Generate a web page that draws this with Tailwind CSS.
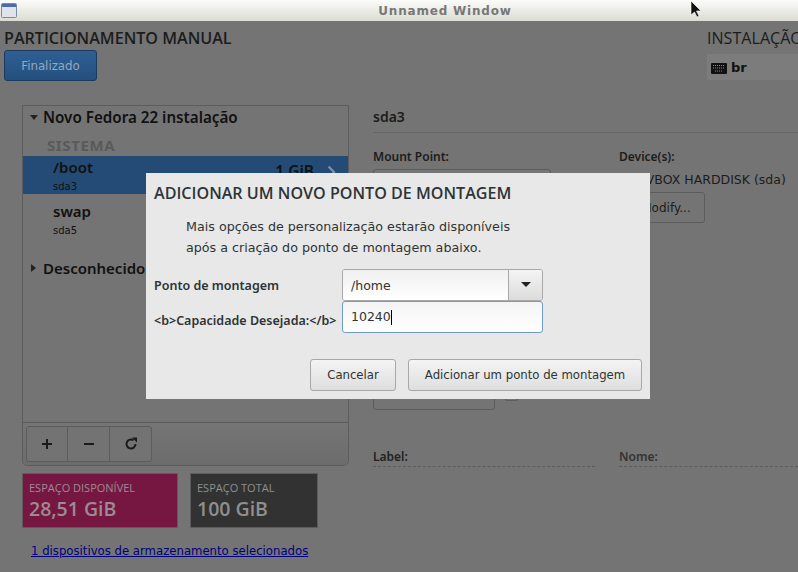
<!DOCTYPE html>
<html><head><meta charset="utf-8"><script src="https://cdn.jsdelivr.net/npm/@tailwindcss/browser@4"></script></head>
<body class="m-0 w-[798px] h-[572px] overflow-hidden relative bg-[#747474] font-['DejaVu_Sans',sans-serif]">
<header class="h-[21px] bg-gradient-to-b from-[#fbfbf9] to-[#dcdcd4] flex items-center relative">
  <svg class="absolute left-[1px] top-[3px]" width="16" height="15" viewBox="0 0 16 15"><rect x="0.5" y="0.5" width="15" height="14" rx="1" fill="#dfe3ea" stroke="#7a8aa5"/><rect x="1" y="1" width="14" height="3" fill="#4a6da8"/></svg>
  <div class="w-full text-center text-[12px] font-bold tracking-[0.8px] text-[#777] pl-[92px]">Unnamed Window</div>
</header>
<div class="flex h-[551px]">
  <section class="w-[349px] shrink-0 flex flex-col">
    <h1 class="pl-1 pt-[7px] pb-[2px] font-['Open_Sans',sans-serif] text-[16.1px] leading-[20px] font-semibold text-[#1c1c1c] whitespace-nowrap">PARTICIONAMENTO MANUAL</h1>
    <button class="ml-1 w-[93px] h-[31px] pt-[2px] rounded-[3px] border border-[#1d3a5c] bg-gradient-to-b from-[#2f5f93] to-[#24507f] text-[11.8px] text-[#94a8bf] text-center">Finalizado</button>
    <div class="ml-[22px] mt-6 w-[327px] h-[361px] border border-[#5c5c5c] rounded-b-[5px] flex flex-col">
      <div class="flex-1 flex flex-col">
        <div class="flex items-center h-[23px] pl-[6px] gap-[4px]">
          <svg width="10" height="6" viewBox="0 0 10 6"><path d="M1 0h8L5 5z" fill="#222"/></svg>
          <span class="font-['Noto_Sans',sans-serif] font-semibold text-[15.2px] text-[#111] whitespace-nowrap">Novo Fedora 22 instalação</span>
        </div>
        <div class="pl-6 mt-[10px] h-[12px] leading-[12px] text-[15px] tracking-[0.6px] font-bold font-['Noto_Sans',sans-serif] text-[#5a5a5a]">SISTEMA</div>
        <div class="mt-[5px] h-[38px] bg-[#234b75] pl-[30px] pr-[12px] flex justify-between">
          <div class="flex flex-col">
            <span class="font-['Noto_Sans',sans-serif] font-semibold text-[15px] leading-[20px] mt-[1px] text-[#111]">/boot</span>
            <span class="text-[10px] leading-[13px] mt-[3px] text-[#111]">sda3</span>
          </div>
          <div class="flex items-center h-[32px] gap-[13px]">
            <span class="font-['Noto_Sans',sans-serif] font-semibold text-[15.5px] text-[#111]">1 GiB</span>
            <svg width="9" height="14" viewBox="0 0 9 14"><path d="M1.5 1.5 7 7l-5.5 5.5" fill="none" stroke="#7f8ea0" stroke-width="2.2"/></svg>
          </div>
        </div>
        <div class="mt-[7px] pl-[30px] flex flex-col">
          <span class="font-['Noto_Sans',sans-serif] font-semibold text-[15px] leading-[20px] text-[#111]">swap</span>
          <span class="text-[10px] leading-[13px] mt-[3px] text-[#111]">sda5</span>
        </div>
        <div class="flex items-center h-[24px] mt-[19px] pl-[8px] gap-[6px]">
          <svg width="6" height="10" viewBox="0 0 6 10"><path d="M0 1v8l5-4z" fill="#222"/></svg>
          <span class="font-['Noto_Sans',sans-serif] font-semibold text-[15px] text-[#111]">Desconhecido</span>
        </div>
      </div>
      <div class="h-[43px] border-t border-[#5c5c5c] bg-gradient-to-b from-[#757575] to-[#6c6c6c] pl-[3px] pt-[3px] rounded-b-[5px]">
        <div class="flex w-[126px] h-[36px] border border-[#5c5c5c] rounded-[3px] bg-[#737373] text-[#1a1a1a]">
          <div class="w-[41px] border-r border-[#5c5c5c] flex items-center justify-center"><svg width="12" height="12" viewBox="0 0 12 12"><path d="M6 1v10M1 6h10" stroke="#1a1a1a" stroke-width="2"/></svg></div>
          <div class="w-[42px] border-r border-[#5c5c5c] flex items-center justify-center"><svg width="12" height="12" viewBox="0 0 12 12"><path d="M1 6h10" stroke="#1a1a1a" stroke-width="2"/></svg></div>
          <div class="flex-1 flex items-center justify-center"><svg width="14" height="14" viewBox="0 0 14 14"><path d="M11.5 7A4.5 4.5 0 1 1 9.6 3.3" fill="none" stroke="#1a1a1a" stroke-width="2"/><path d="M8 0.5h5v5z" fill="#1a1a1a"/></svg></div>
        </div>
      </div>
    </div>
    <div class="ml-[22px] mt-[7px] flex gap-3 font-['Open_Sans',sans-serif]">
      <div class="w-[156px] h-[55px] bg-[#761742] border border-[#5c5c5c] pl-[6px] pt-[7px] flex flex-col text-[#9c8b94]">
        <span class="text-[11px] leading-[14px] whitespace-nowrap">ESPAÇO DISPONÍVEL</span>
        <span class="text-[19.5px] leading-[24px] mt-[2px] font-semibold">28,51 GiB</span>
      </div>
      <div class="w-[128px] h-[55px] bg-[#323232] border border-[#5c5c5c] pl-[6px] pt-[7px] flex flex-col text-[#8f8f8f]">
        <span class="text-[11px] leading-[14px] whitespace-nowrap">ESPAÇO TOTAL</span>
        <span class="text-[19.5px] leading-[24px] mt-[2px] font-semibold">100 GiB</span>
      </div>
    </div>
    <a class="ml-[31px] mt-[15px] text-[11.7px] leading-[16px] text-[#00007f] underline whitespace-nowrap">1 dispositivos de armazenamento selecionados</a>
  </section>
  <section class="flex-1 min-w-0 flex flex-col pl-[24px] overflow-hidden">
    <div class="flex justify-end h-[84px] pt-[7px]">
      <div class="w-[91px] shrink-0 overflow-hidden">
        <div class="font-['Open_Sans',sans-serif] text-[16.1px] leading-[20px] text-[#1c1c1c] whitespace-nowrap">INSTALAÇÃO</div>
        <div class="mt-[6px] h-[26px] bg-[#7c7c7c] flex items-center pl-[4px] gap-[4px] pt-[2px]">
          <svg width="16" height="11" viewBox="0 0 16 11"><rect width="16" height="11" rx="1" fill="#111"/><path d="M2 2.5h12M2 5h12M4 8h8" stroke="#8a8a8a" stroke-dasharray="1 1"/></svg>
          <span class="text-[13px] font-bold text-[#111]">br</span>
        </div>
      </div>
    </div>
    <div class="h-[28px] border-b border-[#666] text-[14px] leading-[24px] font-['Noto_Sans',sans-serif] font-semibold text-[#1c1c1c]">sda3</div>
    <div class="flex mt-[16px]">
      <div class="w-[246px] shrink-0">
        <div class="text-[12px] leading-[16px] font-semibold text-[#1c1c1c] font-['Noto_Sans',sans-serif]">Mount Point:</div>
        <div class="mt-[4px] w-[178px] h-[30px] border border-[#5c5c5c] rounded-[3px] bg-[#777]"></div>
      </div>
      <div class="flex-1 whitespace-nowrap">
        <div class="text-[12px] leading-[16px] font-semibold text-[#1c1c1c] font-['Noto_Sans',sans-serif]">Device(s):</div>
        <div class="mt-[7px] text-[12.5px] leading-[16px] text-[#1c1c1c]">ATA VBOX HARDDISK (sda)</div>
        <button class="mt-[4px] w-[86px] h-[31px] border border-[#5c5c5c] rounded-[3px] text-[12px] text-[#1c1c1c] pl-[8px]">Modify...</button>
      </div>
    </div>
    <div class="flex items-center gap-[10px] mt-[156px] h-[31px]">
      <div class="w-[122px] h-[31px] border border-[#5c5c5c] rounded-[3px]"></div>
      <div class="w-[13px] h-[13px] border border-[#5c5c5c] rounded-[2px]"></div>
    </div>
    <div class="flex mt-[38px]">
      <div class="w-[222px] mr-[24px] border-b border-dashed border-[#5c5c5c] text-[12px] leading-[18px] font-semibold text-[#222] font-['Noto_Sans',sans-serif] h-[19px]">Label:</div>
      <div class="flex-1 border-b border-dashed border-[#5c5c5c] text-[12px] leading-[18px] font-semibold text-[#333] font-['Noto_Sans',sans-serif] h-[19px]">Nome:</div>
    </div>
  </section>
</div>
<div class="absolute left-[146px] top-[173px] w-[504px] h-[226px] bg-[#e8e8e8] text-[#2e3436] flex flex-col">
  <h2 class="pl-2 pt-[10px] font-['Open_Sans',sans-serif] text-[16.1px] leading-[20px] font-semibold whitespace-nowrap">ADICIONAR UM NOVO PONTO DE MONTAGEM</h2>
  <p class="pl-10 mt-[13px] text-[12.7px] leading-[21px] whitespace-nowrap">Mais opções de personalização estarão disponíveis<br>após a criação do ponto de montagem abaixo.</p>
  <div class="flex mt-[11px] pl-2">
    <div class="w-[188px] flex flex-col text-[12.5px] font-semibold font-['Noto_Sans',sans-serif]">
      <span class="h-[32px] leading-[34px]">Ponto de montagem</span>
      <span class="h-[32px] leading-[40px] whitespace-nowrap">&lt;b&gt;Capacidade Desejada:&lt;/b&gt;</span>
    </div>
    <div class="flex flex-col w-[201px]">
      <div class="flex h-[32px] border border-[#a8a8a8] rounded-[3px] overflow-hidden">
        <div class="flex-1 bg-gradient-to-b from-[#f0f0f0] to-white border-r border-[#a8a8a8] pl-2 text-[12.5px] leading-[31px]">/home</div>
        <div class="w-[33px] bg-gradient-to-b from-[#f4f4f4] to-[#dcdcdc] flex items-center justify-center"><svg width="10" height="6" viewBox="0 0 10 6"><path d="M0 0h10L5 5z" fill="#222"/></svg></div>
      </div>
      <div class="h-[32px] border border-[#6f9ccb] rounded-[3px] bg-gradient-to-b from-[#f4f4f4] to-white pl-2 text-[12.5px] leading-[30px]">10240<span class="inline-block w-px h-[15px] bg-black align-middle"></span></div>
    </div>
  </div>
  <div class="flex justify-end gap-3 pr-2 mt-[26px]">
    <button class="w-[86px] h-[32px] pt-[2px] border border-[#a8a8a8] rounded-[3px] bg-gradient-to-b from-[#f4f4f4] to-[#dedede] text-[11.7px] text-[#2e3436]">Cancelar</button>
    <button class="w-[234px] h-[32px] pt-[2px] border border-[#a8a8a8] rounded-[3px] bg-gradient-to-b from-[#f4f4f4] to-[#dedede] text-[11.7px] text-[#2e3436]">Adicionar um ponto de montagem</button>
  </div>
</div>
<svg class="absolute left-[690px] top-0" width="13" height="19" viewBox="0 0 13 19"><path d="M1 1v14l3.5-3 2.5 5 2-1-2.5-5H11z" fill="#111" stroke="#fff" stroke-width="0.6"/></svg>
</body></html>
